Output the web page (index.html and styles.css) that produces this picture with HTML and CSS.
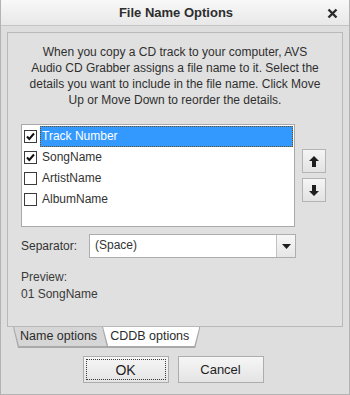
FILE: index.html
```html
<!DOCTYPE html>
<html>
  <head>
    <title>File Name Options</title>
    <link rel="stylesheet" href="styles.css">
  </head>
  <body>
    <div class="window">
      <div class="titlebar">
        <span class="title">File Name Options</span>
        <span class="close">
          <svg width="11" height="11" viewBox="0 0 11 11"><path d="M1.5 1.5 L9.5 9.5 M9.5 1.5 L1.5 9.5" stroke="#2b2b2b" stroke-width="2.4"/></svg>
        </span>
      </div>

      <div class="content">
        <div class="panel">
          <p class="intro">
            When you copy a CD track to your computer, AVS<br>
            Audio CD Grabber assigns a file name to it. Select the<br>
            details you want to include in the file name. Click Move<br>
            Up or Move Down to reorder the details.
          </p>

          <div class="list-row">
            <div class="list">
              <div class="item">
                <span class="check checked"></span>
                <span class="label selected">Track Number</span>
              </div>
              <div class="item">
                <span class="check checked"></span>
                <span class="label">SongName</span>
              </div>
              <div class="item">
                <span class="check"></span>
                <span class="label">ArtistName</span>
              </div>
              <div class="item">
                <span class="check"></span>
                <span class="label">AlbumName</span>
              </div>
            </div>
            <div class="move-buttons">
              <button class="move">
                <svg width="10" height="11" viewBox="0 0 10 11"><path d="M5 0 L10 5 L7 5 L7 11 L3 11 L3 5 L0 5 Z" fill="#1e1e1e"/></svg>
              </button>
              <button class="move">
                <svg width="10" height="11" viewBox="0 0 10 11"><path d="M5 11 L10 6 L7 6 L7 0 L3 0 L3 6 L0 6 Z" fill="#1e1e1e"/></svg>
              </button>
            </div>
          </div>

          <div class="separator-row">
            <span class="sep-label">Separator:</span>
            <div class="combo">
              <span class="combo-value">(Space)</span>
              <span class="combo-drop">
                <svg width="9" height="5" viewBox="0 0 9 5"><path d="M0 0 L9 0 L4.5 5 Z" fill="#1e1e1e"/></svg>
              </span>
            </div>
          </div>

          <div class="preview">
            <div>Preview:</div>
            <div>01 SongName</div>
          </div>
        </div>

        <div class="tabs">
          <div class="tab"><span>Name options</span></div>
          <div class="tab active"><span>CDDB options</span></div>
        </div>

        <div class="actions">
          <button class="btn default"><span>OK</span></button>
          <button class="btn"><span>Cancel</span></button>
        </div>
      </div>
    </div>
  </body>
</html>
```

FILE: styles.css
```css
body {
  margin: 0;
  padding: 0;
  font-family: "Liberation Sans", Arial, sans-serif;
  font-size: 12px;
  color: #333333;
  background: #dedede;
}

.window {
  width: 350px;
  height: 395px;
  box-sizing: border-box;
  border: 1px solid #b3b3b3;
  border-top: none;
  background: #dedede;
}

.titlebar {
  height: 25px;
  border-bottom: 1px solid #c4c4c4;
  background: linear-gradient(#f8f8f8, #e8e8e8);
  display: flex;
  align-items: center;
  justify-content: center;
  position: relative;
}

.title {
  font-size: 13px;
  font-weight: bold;
  color: #2e2e2e;
  margin-left: 2px;
}

.close {
  position: absolute;
  right: 11px;
  top: 8px;
  display: flex;
}

.content {
  padding: 6px 6px 0 6px;
}

.panel {
  height: 295px;
  box-sizing: border-box;
  border: 1px solid #b9b9b9;
  background: #e0e0e0;
  padding: 11px 0 0 13px;
}

.intro {
  margin: 0 0 16px -13px;
  text-align: center;
  line-height: 16px;
  color: #2f2f2f;
}

.list-row {
  display: flex;
  gap: 7px;
}

.list {
  width: 274px;
  height: 103px;
  box-sizing: border-box;
  border: 1px solid #a9a9a9;
  background: #ffffff;
  padding: 1px 0 0 2px;
}

.item {
  height: 21px;
  display: flex;
  align-items: center;
}

.check {
  width: 13px;
  height: 13px;
  box-sizing: border-box;
  border: 1px solid #3c3c3c;
  background: #ffffff;
  flex-shrink: 0;
}

.check.checked {
  background: #ffffff url("data:image/svg+xml;utf8,<svg xmlns='http://www.w3.org/2000/svg' width='11' height='11' viewBox='0 0 11 11'><path d='M2 5.5 L4.3 8 L9 2.5' fill='none' stroke='%23111' stroke-width='2'/></svg>") center no-repeat;
}

.label {
  margin-left: 3px;
  padding-left: 2px;
  height: 21px;
  line-height: 21px;
  flex: 1;
  color: #333333;
  box-sizing: border-box;
}

.label.selected {
  background: #3399ff;
  color: #ffffff;
  outline: 1px dotted #7a4a10;
  outline-offset: -1px;
  margin-right: 1px;
}

.move-buttons {
  display: flex;
  flex-direction: column;
  gap: 5px;
  padding-top: 25px;
}

.move {
  width: 24px;
  height: 24px;
  padding: 0;
  border: 1px solid #b4b4b4;
  background: linear-gradient(#f5f5f5, #e2e2e2);
  display: flex;
  align-items: center;
  justify-content: center;
}

.separator-row {
  display: flex;
  align-items: center;
  margin-top: 7px;
}

.sep-label {
  width: 68px;
  color: #333333;
}

.combo {
  width: 207px;
  height: 24px;
  box-sizing: border-box;
  border: 1px solid #adadad;
  background: #ffffff;
  display: flex;
}

.combo-value {
  flex: 1;
  padding-left: 5px;
  line-height: 21px;
}

.combo-drop {
  width: 18px;
  border-left: 1px solid #c2c2c2;
  background: linear-gradient(#f7f7f7, #e6e6e6);
  display: flex;
  align-items: center;
  justify-content: center;
}

.preview {
  margin-top: 11px;
  line-height: 17px;
  color: #3a3a3a;
}

.tabs {
  display: flex;
  height: 20px;
  margin-left: 6px;
}

.tab {
  height: 20px;
  padding: 0 1px 1px 1px;
  background: #a9a9a9;
  clip-path: polygon(0 0, 100% 0, calc(100% - 5px) 100%, 5px 100%);
}

.tab span {
  display: block;
  height: 19px;
  line-height: 18px;
  padding: 0 12px 0 6px;
  font-size: 12.5px;
  color: #2b2b2b;
  background: #d6d6d6;
  white-space: nowrap;
  clip-path: polygon(0 0, 100% 0, calc(100% - 5px) 100%, 5px 100%);
}

.tab:first-child {
  clip-path: polygon(0 0, 100% 0, 100% 100%, 5px 100%);
}

.tab:first-child span {
  clip-path: polygon(0 0, 100% 0, 100% 100%, 5px 100%);
}

.tab.active {
  margin-left: -8px;
}

.tab.active span {
  background: #ffffff;
  padding: 0 10px 0 7px;
}

.actions {
  display: flex;
  justify-content: center;
  gap: 9px;
  margin-top: 9px;
  margin-left: -4px;
}

.btn {
  width: 86px;
  height: 27px;
  padding: 2px;
  border: 1px solid #adadad;
  background: linear-gradient(#f6f6f6, #e4e4e4);
  font-family: "Liberation Sans", Arial, sans-serif;
  font-size: 13px;
  color: #1e1e1e;
  display: flex;
}

.btn span {
  flex: 1;
  display: flex;
  align-items: center;
  justify-content: center;
  border: 1px dotted transparent;
}

.btn.default span {
  border-color: #3a3a3a;
  font-size: 14px;
}
```
